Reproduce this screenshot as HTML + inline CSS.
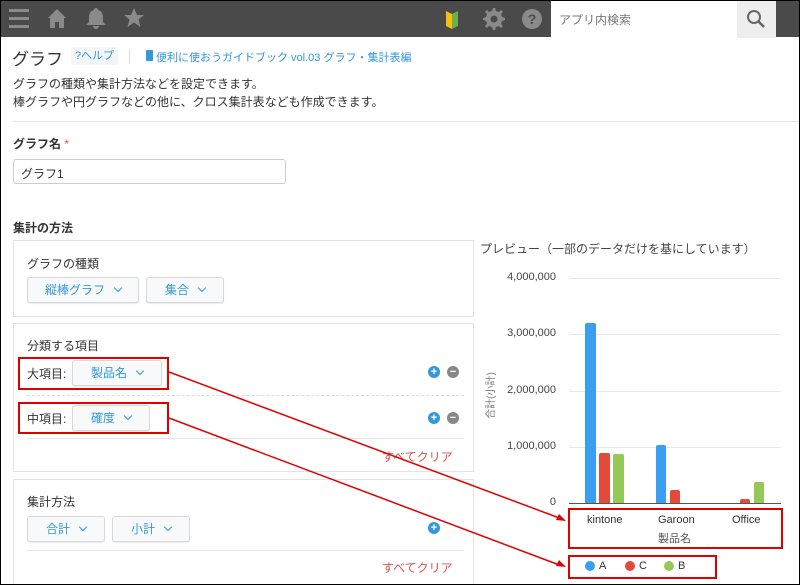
<!DOCTYPE html>
<html><head><meta charset="utf-8"><style>
*{box-sizing:border-box;margin:0;padding:0}
html,body{width:800px;height:585px;overflow:hidden}
body{position:relative;background:#fff;font-family:"Liberation Sans","Noto Sans CJK JP",sans-serif;color:#333;font-size:12px}
.a{position:absolute;white-space:nowrap}
.box{position:absolute;border:1px solid #e3e3e3;background:#fff}
.btn{position:absolute;border:1px solid #d8d8d8;border-radius:3px;background:#f7f9fa;color:#3498db;font-size:12px;text-align:center;box-shadow:0 1px 1px rgba(0,0,0,.08)}
.chev{display:inline-block;width:6px;height:6px;border-right:1px solid #3498db;border-bottom:1px solid #3498db;transform:rotate(45deg);margin-left:10px;position:relative;top:-3px}
.plus,.minus{position:absolute;width:12px;height:12px;border-radius:50%;color:#fff;font-size:11px;line-height:12px;text-align:center;font-weight:bold}
.plus{background:#3498db}.minus{background:#888}
.clr{position:absolute;color:#d9534f;font-size:12px}
.yl{position:absolute;right:244px;font-size:11px;color:#444}
.grid{position:absolute;left:569px;width:212px;height:1px;background:#e8e8e8}
.bar{position:absolute;border-radius:2px 2px 0 0}
.rr{position:absolute;border:2px solid #e00000}
</style></head><body>
<div class="a" style="left:0;top:0;width:800px;height:37px;background:#4a4a4a"></div>
<svg class="a" style="left:0;top:0" width="800" height="38">
<g fill="#8a8a8a">
<rect x="9" y="9" width="20" height="3"/><rect x="9" y="17" width="20" height="3"/><rect x="9" y="25" width="20" height="3"/>
<path d="M57 9 L48 18 L50 18 L50 28 L55 28 L55 22 L59 22 L59 28 L64 28 L64 18 L66 18 Z"/>
<path d="M96 8 a2 2 0 0 1 2 2 c4 1 5 4 5 8 l0 4 l3 3 l-20 0 l3-3 l0-4 c0-4 1-7 5-8 a2 2 0 0 1 2-2z M93 26 h6 a3 3 0 0 1 -6 0z"/>
<path d="M134 8 l3 7 l7 0 l-5.5 4.5 l2 7.5 l-6.5-4.5 l-6.5 4.5 l2-7.5 l-5.5-4.5 l7 0z"/>
<path d="M493 8 l2 0 l1 3 l3 1 l2-2 l2 2 l-2 2 l1 3 l3 1 l0 2 l-3 1 l-1 3 l2 2 l-2 2 l-2-2 l-3 1 l-1 3 l-2 0 l-1-3 l-3-1 l-2 2 l-2-2 l2-2 l-1-3 l-3-1 l0-2 l3-1 l1-3 l-2-2 l2-2 l2 2 l3-1z"/>
<circle cx="532" cy="19" r="10"/>
</g>
<circle cx="494" cy="19" r="3.5" fill="#4a4a4a"/>
<text x="532" y="24" font-size="14" font-weight="bold" fill="#4a4a4a" text-anchor="middle" font-family="Liberation Sans">?</text>
<path d="M446 11 l6 3 l0 15 l-6-3z" fill="#f4c20d"/><path d="M452 14 l6-3 l0 15 l-6 3z" fill="#6ab04c"/>
<rect x="551" y="1" width="186" height="37" fill="#fff"/>
<rect x="737" y="1" width="39" height="37" fill="#eeeeee"/>
<circle cx="754" cy="17" r="6" fill="none" stroke="#666" stroke-width="2"/>
<path d="M758 21 l6 6" stroke="#666" stroke-width="2.5"/>
</svg>
<div class="a" style="left:559px;top:11px;font-size:12px;color:#777">アプリ内検索</div>
<div class="a" style="left:12px;top:45px;font-size:17px;color:#333">グラフ</div>
<div class="a" style="left:71px;top:47px;width:47px;height:18px;background:#f3f5f7;border-radius:3px;color:#3498db;font-size:11px;text-align:center;line-height:18px">?ヘルプ</div>
<div class="a" style="left:129px;top:49px;width:1px;height:15px;background:#ddd"></div>
<div class="a" style="left:146px;top:50px;width:7px;height:11px;background:#3498db;border-radius:1px"></div>
<div class="a" style="left:156px;top:49px;font-size:11px;color:#3498db">便利に使おうガイドブック vol.03 グラフ・集計表編</div>
<div class="a" style="left:13px;top:75px;font-size:12px">グラフの種類や集計方法などを設定できます。</div>
<div class="a" style="left:13px;top:93px;font-size:12px">棒グラフや円グラフなどの他に、クロス集計表なども作成できます。</div>
<div class="a" style="left:13px;top:121px;width:787px;height:1px;background:#e3e3e3"></div>
<div class="a" style="left:13px;top:135px;font-size:12px;font-weight:bold">グラフ名 <span style="color:#e74c3c;font-weight:normal">*</span></div>
<div class="a" style="left:13px;top:159px;width:273px;height:25px;border:1px solid #ccc;border-radius:3px;padding:5px 7px;font-size:12px">グラフ1</div>
<div class="a" style="left:13px;top:219px;font-size:12px;font-weight:bold">集計の方法</div>
<div class="box" style="left:13px;top:240px;width:461px;height:77px"></div>
<div class="a" style="left:27px;top:255px">グラフの種類</div>
<div class="btn" style="left:27px;top:277px;width:112px;height:26px;line-height:24px">縦棒グラフ<span class="chev"></span></div>
<div class="btn" style="left:146px;top:277px;width:78px;height:26px;line-height:24px">集合<span class="chev"></span></div>
<div class="box" style="left:13px;top:323px;width:461px;height:149px"></div>
<div class="a" style="left:27px;top:337px">分類する項目</div>
<div class="a" style="left:27px;top:365px">大項目:</div>
<div class="btn" style="left:72px;top:360px;width:90px;height:26px;line-height:24px">製品名<span class="chev"></span></div>
<div class="plus" style="left:428px;top:366px">+</div><div class="minus" style="left:447px;top:366px">−</div>
<div class="a" style="left:27px;top:395px;width:437px;border-top:1px dashed #ddd"></div>
<div class="a" style="left:27px;top:410px">中項目:</div>
<div class="btn" style="left:72px;top:405px;width:78px;height:26px;line-height:24px">確度<span class="chev"></span></div>
<div class="plus" style="left:428px;top:412px">+</div><div class="minus" style="left:447px;top:412px">−</div>
<div class="a" style="left:27px;top:438px;width:437px;height:1px;background:#e3e3e3"></div>
<div class="clr" style="left:382px;top:448px">すべてクリア</div>
<div class="box" style="left:13px;top:479px;width:461px;height:110px"></div>
<div class="a" style="left:27px;top:493px">集計方法</div>
<div class="btn" style="left:27px;top:516px;width:78px;height:26px;line-height:24px">合計<span class="chev"></span></div>
<div class="btn" style="left:112px;top:516px;width:78px;height:26px;line-height:24px">小計<span class="chev"></span></div>
<div class="plus" style="left:428px;top:522px">+</div>
<div class="a" style="left:27px;top:550px;width:437px;height:1px;background:#e3e3e3"></div>
<div class="clr" style="left:382px;top:559px">すべてクリア</div>

<div class="a" style="left:480px;top:240px;font-size:12px;color:#444">プレビュー（一部のデータだけを基にしています）</div>
<div class="grid" style="top:278px"></div><div class="grid" style="top:334px"></div><div class="grid" style="top:391px"></div><div class="grid" style="top:447px"></div>
<div class="a" style="left:569px;top:503px;width:212px;height:1px;background:#555"></div>
<div class="yl" style="top:271px">4,000,000</div><div class="yl" style="top:327px">3,000,000</div><div class="yl" style="top:384px">2,000,000</div><div class="yl" style="top:440px">1,000,000</div><div class="yl" style="top:496px">0</div>
<div class="a" style="left:466px;top:388px;font-size:10px;color:#777;transform:rotate(-90deg)">合計(小計)</div>
<div class="bar" style="left:585px;top:323px;width:11px;height:180px;background:#3a9ff0"></div>
<div class="bar" style="left:599px;top:453px;width:11px;height:50px;background:#e5493a"></div>
<div class="bar" style="left:613px;top:454px;width:11px;height:49px;background:#94c95a"></div>
<div class="bar" style="left:656px;top:445px;width:10px;height:58px;background:#3a9ff0"></div>
<div class="bar" style="left:670px;top:490px;width:10px;height:13px;background:#e5493a"></div>
<div class="bar" style="left:740px;top:499px;width:10px;height:4px;background:#e5493a"></div>
<div class="bar" style="left:754px;top:482px;width:10px;height:21px;background:#94c95a"></div>
<div class="a" style="left:587px;top:514px;font-size:11px">kintone</div>
<div class="a" style="left:658px;top:514px;font-size:11px">Garoon</div>
<div class="a" style="left:732px;top:514px;font-size:11px">Office</div>
<div class="a" style="left:658px;top:530px;font-size:11px;color:#555">製品名</div>
<div class="rr" style="left:568px;top:508px;width:215px;height:41px"></div>
<div class="a" style="left:585px;top:561px;width:10px;height:10px;border-radius:50%;background:#3a9ff0"></div><div class="a" style="left:599px;top:560px;font-size:11px">A</div>
<div class="a" style="left:625px;top:561px;width:10px;height:10px;border-radius:50%;background:#e5493a"></div><div class="a" style="left:639px;top:560px;font-size:11px">C</div>
<div class="a" style="left:664px;top:561px;width:10px;height:10px;border-radius:50%;background:#94c95a"></div><div class="a" style="left:678px;top:560px;font-size:11px">B</div>
<div class="rr" style="left:568px;top:555px;width:149px;height:24px"></div>
<div class="rr" style="left:18px;top:357px;width:151px;height:33px"></div>
<div class="rr" style="left:18px;top:402px;width:151px;height:32px"></div>
<svg class="a" style="left:0;top:0" width="800" height="585">
<g stroke="#e00000" stroke-width="1.5" fill="#e00000">
<line x1="169" y1="372" x2="562" y2="519"/><path d="M566 521 l-10 -1 l3 -6z" stroke="none"/>
<line x1="169" y1="418" x2="562" y2="566"/><path d="M566 567 l-10 -1 l3 -6z" stroke="none"/>
</g>
<rect x="0.5" y="0.5" width="799" height="584" fill="none" stroke="#000"/>
</svg>
</body></html>
